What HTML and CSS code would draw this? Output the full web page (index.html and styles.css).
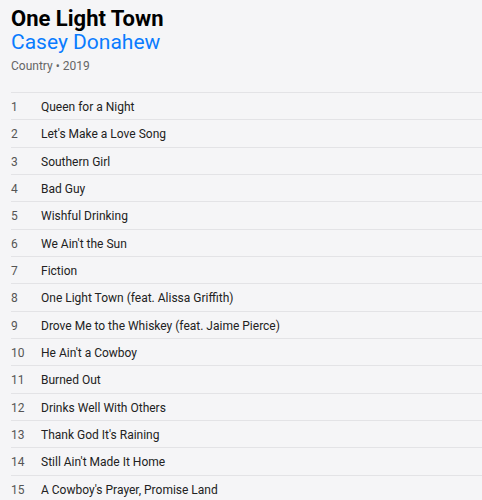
FILE: index.html
```html
<!DOCTYPE html>
<html>

<head>
	<meta charset="utf-8" />
	<title>One Light Town</title>
	<meta name="viewport" content="width=device-width, initial-scale=1" />
	<link rel="stylesheet" href="styles.css">
</head>

<body>
	<main class="album">
		<header class="album-head">
			<h1 class="album-title">One Light Town</h1>
			<h2 class="album-artist">Casey Donahew</h2>
			<p class="album-meta">Country &bull; 2019</p>
		</header>
		<ol class="tracks">
			<li class="track"><span class="num">1</span><span class="name">Queen for a Night</span></li>
			<li class="track"><span class="num">2</span><span class="name">Let's Make a Love Song</span></li>
			<li class="track"><span class="num">3</span><span class="name">Southern Girl</span></li>
			<li class="track"><span class="num">4</span><span class="name">Bad Guy</span></li>
			<li class="track"><span class="num">5</span><span class="name">Wishful Drinking</span></li>
			<li class="track"><span class="num">6</span><span class="name">We Ain't the Sun</span></li>
			<li class="track"><span class="num">7</span><span class="name">Fiction</span></li>
			<li class="track"><span class="num">8</span><span class="name">One Light Town (feat. Alissa Griffith)</span></li>
			<li class="track"><span class="num">9</span><span class="name">Drove Me to the Whiskey (feat. Jaime Pierce)</span></li>
			<li class="track"><span class="num">10</span><span class="name">He Ain't a Cowboy</span></li>
			<li class="track"><span class="num">11</span><span class="name">Burned Out</span></li>
			<li class="track"><span class="num">12</span><span class="name">Drinks Well With Others</span></li>
			<li class="track"><span class="num">13</span><span class="name">Thank God It's Raining</span></li>
			<li class="track"><span class="num">14</span><span class="name">Still Ain't Made It Home</span></li>
			<li class="track"><span class="num">15</span><span class="name">A Cowboy's Prayer, Promise Land</span></li>
		</ol>
	</main>
</body>

</html>
```

FILE: styles.css
```css
body {
	margin: 0;
	background: #f5f5f7;
	font-family: Roboto, "Open Sans", sans-serif;
	color: #1d1d1f;
}

.album {
	padding: 7px 0 0 11px;
}

.album-head {
	padding-bottom: 18px;
	border-bottom: 1px solid #e3e3e6;
}

.album-title {
	margin: 0;
	font-size: 22px;
	line-height: 24px;
	font-weight: 700;
	color: #000;
}

.album-artist {
	margin: 0;
	font-size: 21px;
	line-height: 22px;
	font-weight: 400;
	color: #0a7cff;
}

.album-meta {
	margin: 5px 0 0;
	font-size: 12px;
	line-height: 16px;
	color: #666;
}

.tracks {
	list-style: none;
	margin: 0;
	padding: 0;
}

.track {
	display: flex;
	box-sizing: border-box;
	height: 27.33px;
	padding-top: 2px;
	align-items: center;
	border-bottom: 1px solid #e3e3e6;
	font-size: 12px;
}

.num {
	width: 30px;
	color: #555;
}

.name {
	color: #222;
}
```
